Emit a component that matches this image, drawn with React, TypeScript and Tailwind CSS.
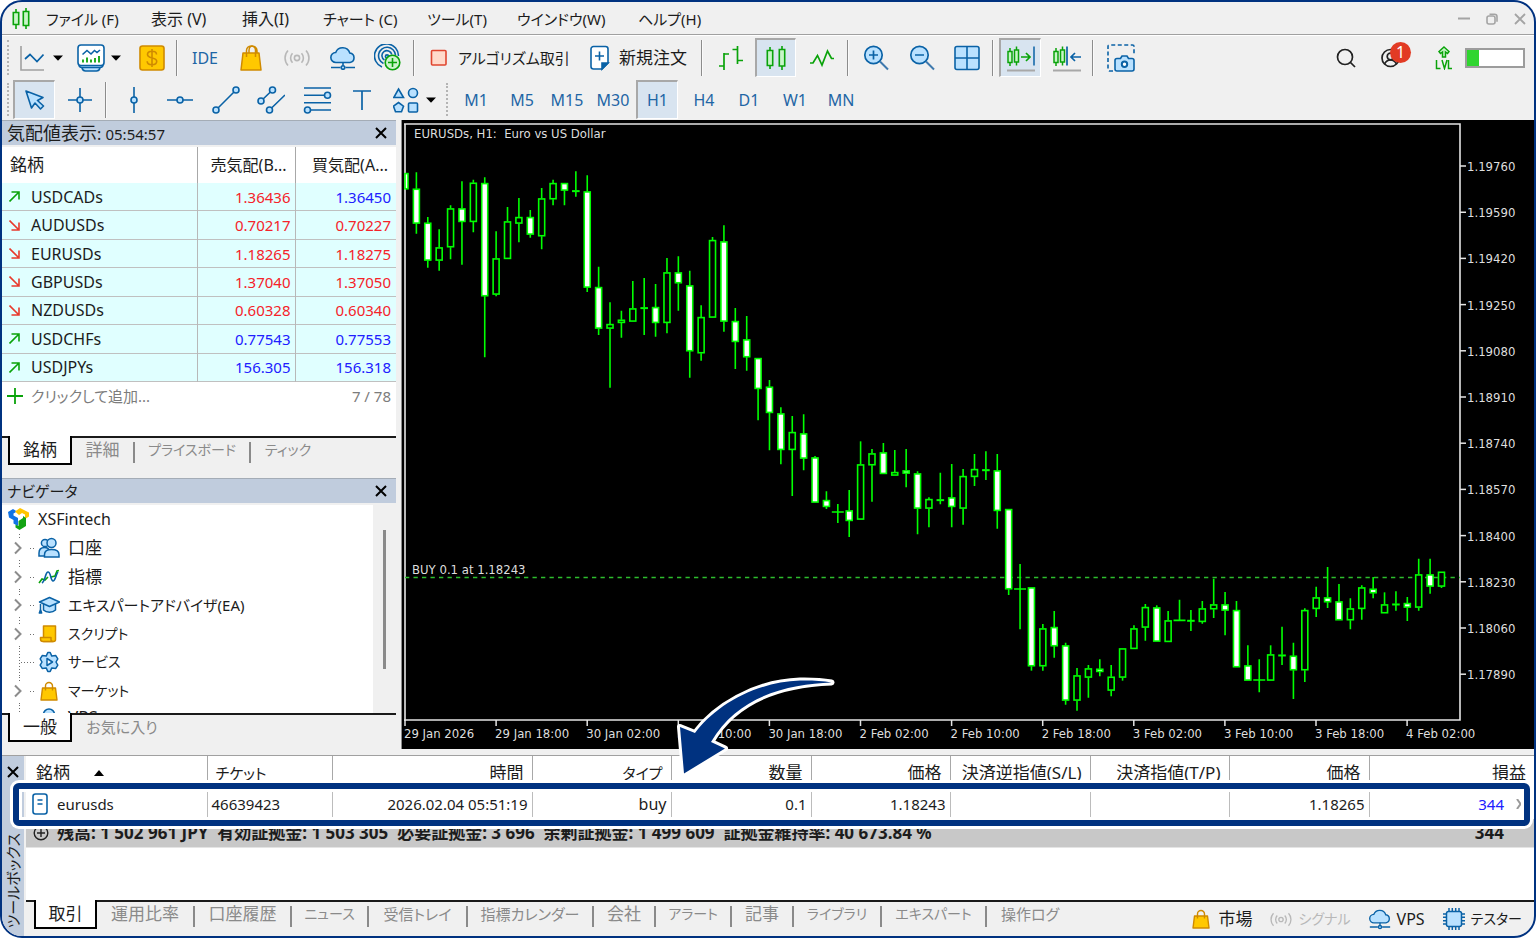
import React from "react";

/* ---------- shared pieces ---------- */

const BLUE = "#0a62a6";
const SKY = "#b9e1ff";
const GREEN = "#0aa30a";
const GOLD = "#cf8a00";
const YELLOW = "#ffc800";

type IconProps = { className?: string };

/* Kana-only labels are set smaller than kanji, mixed ones in between. */
function labelSize(label: string) {
  if (/^[ァ-ー]+$/.test(label)) return "text-sm";
  if (/[ぁ-ー]/.test(label)) return "text-[15px]";
  return "text-[17px]";
}

function Grip() {
  return (
    <div className="flex h-full w-[11px] shrink-0 justify-center py-1" aria-hidden="true">
      <div className="h-full w-0 border-l-2 border-dotted border-[#b4b4b4]" />
    </div>
  );
}

function Separator({ className = "" }: IconProps) {
  return <div className={`h-9 w-[2px] shrink-0 border-r border-[#fafafa] border-l border-l-[#8c8c8c] ${className}`} />;
}

function Caret() {
  return (
    <svg className="h-[6px] w-[10px] shrink-0" viewBox="0 0 10 6">
      <path d="M0 .5h10L5 5.8z" fill="#000" />
    </svg>
  );
}

type ToolProps = { label: string; className: string; active?: boolean; children: React.ReactNode };

function Tool({ label, className, active, children }: ToolProps) {
  const look = active
    ? "bg-[#d8e4f0] border-t-2 border-l-2 border-t-[#a8a8a8] border-l-[#a8a8a8] border-r border-b border-r-white border-b-white"
    : "";
  return (
    <button type="button" aria-label={label} aria-pressed={active} className={`flex h-[39px] shrink-0 items-center ${look} ${className}`}>
      {children}
    </button>
  );
}

function CloseX() {
  return (
    <svg className="size-3" viewBox="0 0 12 12">
      <path d="M1 1l10 10M11 1L1 11" stroke="#000" strokeWidth="2" fill="none" />
    </svg>
  );
}

/* ---------- icons ---------- */

function LogoCandles() {
  return (
    <svg className="h-[22px] w-[18px]" viewBox="0 0 18 22" stroke={GREEN} strokeWidth="1.6" fill="#c8f5c8">
      <path d="M4 1v20M14 0v21" />
      <path d="M1.300 4.500h5.400v12h-5.400zM11.300 3.500h5.400v14h-5.400z" />
    </svg>
  );
}

function Bag({ className = "" }: IconProps) {
  return (
    <svg className={className} viewBox="0 0 22 26" strokeLinejoin="round">
      <path d="M3 8h16l2 17H1z" fill={YELLOW} stroke={GOLD} strokeWidth="1.500" />
      <path d="M6.500 12V5.500a4.500 4.500 0 0 1 9 0V12M9 8V5.500C9 3 10.500 1 12.500 1S17 3 17 5.500V8" fill="none" stroke={GOLD} strokeWidth="1.500" />
    </svg>
  );
}

function SmallBag({ className = "" }: IconProps) {
  return (
    <svg className={className} viewBox="0 0 18 20" strokeLinejoin="round">
      <path d="M2.500 7h13l1.500 12H1z" fill={YELLOW} stroke={GOLD} strokeWidth="1.400" />
      <path d="M5.500 9.500V5a3.500 3.500 0 0 1 7 0v4.500" fill="none" stroke={GOLD} strokeWidth="1.400" />
    </svg>
  );
}

function Signal({ className = "" }: IconProps) {
  return (
    <svg className={className} viewBox="0 0 26 18" fill="none" stroke="#b8b8b8" strokeWidth="1.600">
      <circle cx="13" cy="9" r="2.600" />
      <path d="M8.500 4.200a7 7 0 0 0 0 9.600M17.500 4.200a7 7 0 0 1 0 9.600M4 1.500a11 11 0 0 0 0 15M22 1.500a11 11 0 0 1 0 15" />
    </svg>
  );
}

function Cloud({ className = "" }: IconProps) {
  return (
    <svg className={className} viewBox="0 0 26 24" stroke={BLUE} strokeWidth="1.600">
      <path d="M6 16.500a5 5 0 0 1-.3-10A7.500 7.500 0 0 1 19.800 7 4.800 4.800 0 0 1 20 16.500z" fill={SKY} />
      <path d="M13 16.500v3M1 21.500h9.500M15.500 21.500H25" fill="none" />
      <circle cx="13" cy="21.500" r="1.800" fill={SKY} />
    </svg>
  );
}

function Radar() {
  return (
    <svg className="h-[27px] w-[27px]" viewBox="0 0 27 27" fill="none" stroke={BLUE} strokeWidth="1.600">
      <path d="M8 23A12 12 0 1 1 24.500 12M9.500 19.500a8.500 8.500 0 1 1 12-8.500M10.500 16a5 5 0 1 1 7.300-5.500" />
      <circle cx="13" cy="12.500" r="1.600" fill={SKY} />
      <circle cx="18.500" cy="18.500" r="7.300" fill="#cdf3cd" stroke={GREEN} />
      <path d="M18.500 14v9M14 18.500h9" stroke={GREEN} />
    </svg>
  );
}

function Chip() {
  return (
    <svg className="size-[22px]" viewBox="0 0 22 22" stroke={BLUE} strokeWidth="1.500">
      <path d="M6 0v22M9.300 0v22M12.700 0v22M16 0v22M0 6h22M0 9.300h22M0 12.700h22M0 16h22" />
      <rect x="3.500" y="3.500" width="15" height="15" rx="2" fill={SKY} />
    </svg>
  );
}

/* ---------- menu bar ---------- */

const MENUS = [
  ["ファイル (F)", "w-[105px] text-[15px]"],
  ["表示 (V)", "w-[91px]"],
  ["挿入(I)", "w-[81px]"],
  ["チャート (C)", "w-[104px] text-[15px]"],
  ["ツール(T)", "w-[90px] text-[15px]"],
  ["ウインドウ(W)", "w-[121px] text-[15px]"],
  ["ヘルプ(H)", "w-[80px] text-[15px]"],
];

function MenuBar() {
  return (
    <header className="flex h-[34px] shrink-0 items-center border-b border-white pl-[10px] shadow-[inset_0_-1px_0_#a0a0a0]">
      <div className="w-[34px]"><LogoCandles /></div>
      <nav className="flex pt-px">
        {MENUS.map(([label, look]) => (
          <button key={label} type="button" className={`shrink-0 text-left leading-6 whitespace-nowrap ${look}`}>{label}</button>
        ))}
      </nav>
      <div className="ml-auto flex items-center gap-4 pr-2">
        <button type="button" aria-label="minimize">
          <svg className="size-3" viewBox="0 0 12 12"><path d="M0 5.500h12" stroke="#a4a4a4" strokeWidth="2" /></svg>
        </button>
        <button type="button" aria-label="restore">
          <svg className="size-3" viewBox="0 0 12 12" fill="none" stroke="#a4a4a4" strokeWidth="1.600">
            <rect x="1" y="3" width="8" height="8" rx="2" />
            <path d="M3.500 1.200h5a2.500 2.500 0 0 1 2.500 2.500v5" />
          </svg>
        </button>
        <button type="button" aria-label="close">
          <svg className="size-3" viewBox="0 0 12 12"><path d="M1 1l10 10M11 1L1 11" stroke="#a4a4a4" strokeWidth="1.800" /></svg>
        </button>
      </div>
    </header>
  );
}

/* ---------- toolbars ---------- */

function MainToolbar() {
  return (
    <div className="flex h-[43px] shrink-0 items-center">
      <Grip />
      <Tool label="chart" className="w-[59px] gap-[9px] pl-[7px]">
        <svg className="h-[26px] w-6 shrink-0" viewBox="0 0 24 26" fill="none">
          <path d="M1 1v24h23" stroke="#a0a0a0" strokeWidth="1.600" />
          <path d="M5 14l5-4.500 7 7 6.500-7" stroke={BLUE} strokeWidth="1.700" />
        </svg>
        <Caret />
      </Tool>
      <Tool label="profiles" className="w-[60px] gap-[6px] pl-[5px]">
        <svg className="h-[28px] w-[28px] shrink-0" viewBox="0 0 28 28" fill="none" stroke={BLUE} strokeWidth="1.600">
          <path d="M2 20.500c0 2 1 3 3 3h18c2 0 3-1 3-3M5 24c.5 1.800 1.500 3 3.500 3h11c2 0 3-1.200 3.500-3" fill={SKY} />
          <rect x="1" y="1" width="26" height="20.500" rx="3" fill="#fff" />
          <path d="M5.500 10.500l4.500-4 4 3.500 3.500-3.500 2.500 2 3-2.500" />
          <path d="M6 18.500v-3M10 18.500v-5M14 18.500v-3M18 18.500v-4.500M22 18.500v-6.500" stroke={GREEN} strokeWidth="1.800" />
        </svg>
        <Caret />
      </Tool>
      <Tool label="trade" className="w-10 justify-center">
        <svg className="size-[26px]" viewBox="0 0 26 26" fill="none" stroke={GOLD} strokeWidth="1.600">
          <rect x="1" y="1" width="24" height="24" rx="2.500" fill={YELLOW} />
          <path d="M17.500 9.500c0-2-1.800-3.200-4.500-3.200s-4.500 1.200-4.500 3.300c0 4.800 9.200 2 9.200 6.700 0 2.200-2 3.400-4.700 3.400s-4.800-1.300-4.800-3.400M13 4v18" />
        </svg>
      </Tool>
      <Separator className="mx-1" />
      <button type="button" className="w-[46px] shrink-0 leading-6 text-[#1f66a5]">IDE</button>
      <Tool label="market" className="w-[46px] justify-center"><Bag className="h-[26px] w-[22px]" /></Tool>
      <Tool label="signals" className="w-[46px] justify-center"><Signal className="h-[18px] w-[26px]" /></Tool>
      <Tool label="vps" className="w-[46px] justify-center"><Cloud className="h-6 w-[26px]" /></Tool>
      <Tool label="network" className="w-[43px] justify-center"><Radar /></Tool>
      <Separator className="mx-1" />
      <button type="button" className="flex w-[162px] shrink-0 items-center gap-[10px] pl-[11px] text-[15px] whitespace-nowrap">
        <svg className="size-[18px] shrink-0" viewBox="0 0 18 18"><rect x="1.500" y="1.500" width="14.500" height="14.500" rx="1" fill="#ffdacb" stroke="#e0452f" strokeWidth="1.600" /></svg>
        アルゴリズム取引
      </button>
      <button type="button" className="flex w-[116px] shrink-0 items-center gap-[9px] pl-[9px] text-[17px] whitespace-nowrap">
        <svg className="h-[26px] w-5 shrink-0" viewBox="0 0 20 26" stroke={BLUE} strokeWidth="1.600">
          <path d="M3.500 1.500h12a2.500 2.500 0 0 1 2.500 2.500v14l-6 6H3.500A2.500 2.500 0 0 1 1 21.500V4a2.500 2.500 0 0 1 2.500-2.500z" fill="#fff" />
          <path d="M12 24v-6h6z" fill={BLUE} />
          <path d="M9.500 6.500v9M5 11h9" fill="none" />
        </svg>
        新規注文
      </button>
      <Separator className="mx-1" />
      <Tool label="bars" className="w-12 justify-center">
        <svg className="h-[26px] w-6" viewBox="0 0 24 26" fill="none" stroke={GREEN} strokeWidth="1.700">
          <path d="M5 8v17M5 9h5M0 21h5M18.500 1v18M13.500 4.500h5M18.500 15.500H24" />
        </svg>
      </Tool>
      <Tool label="candles" active className="w-[41px] justify-center">
        <svg className="h-6 w-5" viewBox="0 0 20 24" fill="#c8f5c8" stroke={GREEN} strokeWidth="1.600">
          <path d="M4 1v22M16 0v24" />
          <path d="M1.300 4.500h5.400v15H1.300zM13.300 3.500h5.400v16.500h-5.400z" />
        </svg>
      </Tool>
      <Tool label="line" className="w-[51px] justify-center">
        <svg className="h-5 w-[26px]" viewBox="0 0 26 20" fill="none" stroke={GREEN} strokeWidth="1.700">
          <path d="M1 15h3l4.500-7.500L13 17l5.500-14 4 7.500H25" />
        </svg>
      </Tool>
      <Separator />
      <Tool label="zoom in" className="w-[54px] justify-center">
        <svg className="size-[26px]" viewBox="0 0 26 26" stroke={BLUE} strokeWidth="1.700">
          <circle cx="10.500" cy="10" r="8.700" fill={SKY} />
          <path d="M6 10h9M10.500 5.500v9" />
          <path d="M17 16.500l8 8" stroke="#3f79ad" strokeWidth="2" />
        </svg>
      </Tool>
      <Tool label="zoom out" className="w-[38px] justify-center">
        <svg className="size-[26px]" viewBox="0 0 26 26" stroke={BLUE} strokeWidth="1.700">
          <circle cx="10.500" cy="10" r="8.700" fill={SKY} />
          <path d="M6 10h9" />
          <path d="M17 16.500l8 8" stroke="#3f79ad" strokeWidth="2" />
        </svg>
      </Tool>
      <Tool label="tile" className="w-[51px] justify-center">
        <svg className="size-[26px]" viewBox="0 0 26 26" stroke={BLUE} strokeWidth="1.600">
          <rect x="1" y="1.500" width="24" height="23" rx="2" fill={SKY} />
          <path d="M13 1.500v23M1 13h24" />
        </svg>
      </Tool>
      <Separator />
      <Tool label="autoscroll" active className="ml-[5px] w-[42px] justify-center">
        <svg className="h-7 w-[28px]" viewBox="0 0 28 28" fill="#c8f5c8" stroke={GREEN} strokeWidth="1.500">
          <path d="M3 4v18M9.500 2.500v19" />
          <path d="M1 7.500h4v11H1zM7.500 6h4v12h-4z" />
          <path d="M14 13h9M19 9l4 4-4 4" fill="none" strokeWidth="1.700" />
          <path d="M27 2.500v19" stroke={BLUE} />
          <path d="M0 26.500h28" stroke="#a8a8a8" strokeWidth="2" />
        </svg>
      </Tool>
      <Tool label="shift" className="w-[51px] justify-center">
        <svg className="h-7 w-[28px]" viewBox="0 0 28 28" fill="#c8f5c8" stroke={GREEN} strokeWidth="1.500">
          <path d="M3 4v18M9.500 2.500v19" />
          <path d="M1 7.500h4v11H1zM7.500 6h4v12h-4z" />
          <path d="M14 2.500v19M18 13h10M22 9l-4 4 4 4" stroke={BLUE} fill="none" strokeWidth="1.700" />
          <path d="M0 26.500h28" stroke="#a8a8a8" strokeWidth="2" />
        </svg>
      </Tool>
      <Separator />
      <Tool label="screenshot" className="w-[54px] justify-center">
        <svg className="size-7" viewBox="0 0 28 28" stroke={BLUE} strokeWidth="1.600" fill="none">
          <path d="M6 27H2.500C1.500 27 1 26.500 1 25.500V2.500C1 1.500 1.500 1 2.500 1h23c1 0 1.500.5 1.500 1.500V10" strokeDasharray="4 2.500" />
          <path d="M10 14.500h3.500l1.500-2.500h5l1.500 2.500H25a2 2 0 0 1 2 2V25a2 2 0 0 1-2 2H10a2 2 0 0 1-2-2v-8.500a2 2 0 0 1 2-2z" fill={SKY} />
          <circle cx="17.500" cy="20.200" r="2.700" fill="#fff" strokeWidth="2" />
        </svg>
      </Tool>
      <div className="ml-auto flex items-center pr-[9px]">
        <button type="button" aria-label="search" className="mr-[25px]">
          <svg className="size-5" viewBox="0 0 20 20" fill="none" stroke="#222" strokeWidth="1.700"><circle cx="9" cy="9" r="7.500" /><path d="M14.500 14.500L19 19" /></svg>
        </button>
        <button type="button" aria-label="account" className="relative mr-6 h-5 w-[30px]">
          <svg className="size-5" viewBox="0 0 20 20" fill="none" stroke="#222" strokeWidth="1.700">
            <circle cx="9.500" cy="10" r="8.500" /><circle cx="9.500" cy="8.500" r="3.300" /><path d="M3.500 16c1.500-3 3.500-4 6-4s4.500 1 6 4" />
          </svg>
          <span className="absolute -top-[6px] left-[9px] flex size-[21px] items-center justify-center rounded-full bg-[#e23b24] text-base leading-5 text-white">1</span>
        </button>
        <svg className="mr-3 h-[24px] w-[18px]" viewBox="0 0 18 24" fill="#c8f5c8" stroke={GREEN} strokeWidth="1.500" aria-label="LVL" role="img">
          <path d="M9 1l5 4.500-1.500 2L10.500 6v5h-3V6l-2 1.500L4 5.500z" />
          <path d="M1.500 14v8.500h4M7 14l2.500 8.500L12 14M13.500 14v8.500H17" fill="none" />
        </svg>
        <div className="flex h-5 w-[60px] border-2 border-[#9c9c9c] bg-white"><div className="w-3 bg-[#2fd52f]" /></div>
      </div>
    </div>
  );
}

const FRAMES = [
  ["M1", "w-12"],
  ["M5", "w-11"],
  ["M15", "w-[46px]"],
  ["M30", "w-[46px]"],
  ["H1", "w-[42px]"],
  ["H4", "w-[52px]"],
  ["D1", "w-[38px]"],
  ["W1", "w-[54px]"],
  ["MN", "w-[38px]"],
];

function DrawToolbar() {
  const line = { fill: SKY, stroke: BLUE, strokeWidth: 1.6 };
  return (
    <div className="flex h-[41px] shrink-0 items-center">
      <Grip />
      <Tool label="cursor" active className="w-[42px] justify-center">
        <svg className="size-5" viewBox="0 0 20 20" {...line} strokeLinejoin="round">
          <path d="M1 1l17 6.500-5.500 3 6 5.500-3 3-5.500-6-3.500 5z" />
        </svg>
      </Tool>
      <Tool label="crosshair" className="w-[50px] justify-center">
        <svg className="size-6" viewBox="0 0 24 24" {...line}><path d="M12 0v24M0 12h24" /><circle cx="12" cy="12" r="3" /></svg>
      </Tool>
      <Separator />
      <Tool label="vertical line" className="w-[54px] justify-center">
        <svg className="size-[26px]" viewBox="0 0 26 26" {...line}><path d="M13 0v26" /><circle cx="13" cy="13" r="3" /></svg>
      </Tool>
      <Tool label="horizontal line" className="w-[38px] justify-center">
        <svg className="size-[26px]" viewBox="0 0 26 26" {...line}><path d="M0 13h26" /><circle cx="13" cy="13" r="3" /></svg>
      </Tool>
      <Tool label="trend line" className="w-[54px] justify-center">
        <svg className="size-7" viewBox="0 0 28 28" {...line}><path d="M4 24L24 4" /><circle cx="4" cy="24" r="3" /><circle cx="24" cy="4" r="3" /></svg>
      </Tool>
      <Tool label="channel" className="w-9 justify-center">
        <svg className="size-7" viewBox="0 0 28 28" {...line}>
          <path d="M4 15L15.500 4M12.500 24L28 9" /><circle cx="4" cy="15" r="3" /><circle cx="15.500" cy="4" r="3" /><circle cx="12.500" cy="24" r="3" />
        </svg>
      </Tool>
      <Tool label="fibonacci" className="w-14 justify-center">
        <svg className="size-[26px] overflow-visible" viewBox="0 0 26 26" {...line}>
          <path d="M0 1h27M0 8.300h27M0 15.700h27M0 23h27" /><circle cx="23.500" cy="8.300" r="3" /><circle cx="3.500" cy="23" r="3" />
        </svg>
      </Tool>
      <Tool label="text" className="w-[34px] justify-center">
        <svg className="size-5" viewBox="0 0 20 20" stroke={BLUE} strokeWidth="1.700"><path d="M1 1h18M10 1v19" /></svg>
      </Tool>
      <Tool label="shapes" className="w-[62px] gap-[7px] pl-[14px]">
        <svg className="size-[26px] shrink-0" viewBox="0 0 26 26" {...line}>
          <path d="M5.500 2l5 8.500H.8zM5.500 15.500l5 3.700-2 5.500h-6l-2-5.500z" /><circle cx="20" cy="6" r="4.500" /><rect x="15.500" y="16" width="9" height="9" rx="1" />
        </svg>
        <Caret />
      </Tool>
      <Grip />
      {FRAMES.map(([label, width]) => (
        <Tool key={label} label={label} active={label === "H1"} className={`justify-center text-[#1f66a5] ${width}`}>{label}</Tool>
      ))}
    </div>
  );
}

/* ---------- left panels ---------- */

function PanelTitle({ children }: { children: React.ReactNode }) {
  return (
    <div className="flex h-[25px] shrink-0 items-center justify-between border-t border-[#a4acb6] bg-[#c0ccdd] pr-[9px] pl-[5px]">
      <h2>{children}</h2>
      <button type="button" aria-label="close panel"><CloseX /></button>
    </div>
  );
}

type TabDef = { label: string; width: string };

function Tabs({ tabs, pad, activeWidth }: { tabs: TabDef[]; pad: string; activeWidth: string }) {
  return (
    <div className={`flex border-t-2 border-[#1a1a1a] ${pad}`}>
      {tabs.map((tab, i) =>
        i === 0 ? (
          <button key={tab.label} type="button" className={`-mt-[2px] h-[29px] shrink-0 border-x-2 border-b-2 border-black bg-white text-[17px] leading-6 ${activeWidth}`}>{tab.label}</button>
        ) : (
          <button key={tab.label} type="button" className={`my-1 flex h-[21px] shrink-0 items-start justify-center whitespace-nowrap text-[#8a8a8a] ${i < tabs.length - 1 ? "border-r-2 border-[#8a8a8a]" : ""} ${tab.width}`}>
            <span className={labelSize(tab.label)}><span className="block leading-4">{tab.label}</span></span>
          </button>
        ),
      )}
    </div>
  );
}

type Quote = [string, boolean, string, string, string, string];
const RED = "text-[#f5232a]";
const INK = "text-[#2020ff]";
const QUOTES: Quote[] = [
  ["USDCADs", true, "1.36436", "1.36450", RED, INK],
  ["AUDUSDs", false, "0.70217", "0.70227", RED, RED],
  ["EURUSDs", false, "1.18265", "1.18275", RED, RED],
  ["GBPUSDs", false, "1.37040", "1.37050", RED, RED],
  ["NZDUSDs", false, "0.60328", "0.60340", RED, RED],
  ["USDCHFs", true, "0.77543", "0.77553", INK, INK],
  ["USDJPYs", true, "156.305", "156.318", INK, INK],
];

function MarketWatch() {
  return (
    <section className="shrink-0">
      <PanelTitle><span className="text-lg leading-6">気配値表示</span>: <span className="text-[15px]">05:54:57</span></PanelTitle>
      <div className="mt-[2px] h-[289px] bg-white">
        <table className="h-[235px] w-full table-fixed border-collapse">
          <colgroup><col /><col className="w-[98px]" /><col className="w-[101px]" /></colgroup>
          <thead>
            <tr className="h-[36px] whitespace-nowrap">
              <th className="border-r border-[#a8a8a8] pl-2 text-left text-[17px] font-normal">銘柄</th>
              <th className="border-r border-[#a8a8a8] p-0 pr-2 text-right font-normal">売気配(B...</th>
              <th className="p-0 pr-2 text-right font-normal">買気配(A...</th>
            </tr>
          </thead>
          <tbody className="bg-[#e0ffff]">
            {QUOTES.map(([name, up, bid, ask, bidTone, askTone]) => (
              <tr key={name} className="border-b border-[#c0c0c0]">
                <td className="border-r border-[#b8b8b8] p-0 pl-[7px]">
                  <div className="flex items-center gap-[11px]">
                    <svg className="size-[11px]" viewBox="0 0 11 11" fill="none" stroke={up ? GREEN : "#e83a2c"} strokeWidth="1.600">
                      {up ? <path d="M.5 10.500L10 1M2.500 1H10v7.500" /> : <path d="M.5.5L10 10M2.500 10H10V2.500" />}
                    </svg>
                    <span className="leading-6">{name}</span>
                  </div>
                </td>
                <td className={`border-r border-[#b8b8b8] p-0 pr-1 text-right text-[15px] ${bidTone}`}>{bid}</td>
                <td className={`p-0 pr-[5px] text-right text-[15px] ${askTone}`}>{ask}</td>
              </tr>
            ))}
          </tbody>
        </table>
        <div className="flex h-7 items-center px-[5px] text-[15px] text-[#7c7c7c]">
          <svg className="mr-2 size-4" viewBox="0 0 16 16"><path d="M8 0v16M0 8h16" stroke={GREEN} strokeWidth="1.800" /></svg>
          <button type="button">クリックして追加...</button>
          <span className="ml-auto">7 / 78</span>
        </div>
      </div>
      <div className="h-[42px]">
        <Tabs
          pad="pl-[6px]"
          activeWidth="w-[64px]"
          tabs={[
            { label: "銘柄", width: "" },
            { label: "詳細", width: "w-[63px]" },
            { label: "プライスボード", width: "w-[116px]" },
            { label: "ティック", width: "w-[74px]" },
          ]}
        />
      </div>
    </section>
  );
}

const NAV_ICONS: Record<string, React.ReactNode> = {
  accounts: (
    <g fill={SKY} stroke={BLUE} strokeWidth="1.500">
      <circle cx="7" cy="6" r="3.600" /><path d="M1 19v-3c0-3.500 2-5.500 5.500-5.500S11 12 11 14v5z" />
      <circle cx="13.500" cy="6" r="4.500" /><path d="M6.500 20v-2.500c0-3 2.500-5 7-5s7.500 2 7.500 5V20z" />
    </g>
  ),
  indicators: (
    <g fill="none" strokeWidth="1.600">
      <path d="M1 17l3-4 3 1 3-3M13 11l4-1 2-5 2-.5" stroke={GREEN} />
      <path d="M4 17C8 14 7 6 10 6s2.500 9 5 9 3-7 5-9" stroke={BLUE} />
    </g>
  ),
  experts: (
    <g fill={SKY} stroke={BLUE} strokeWidth="1.500" strokeLinejoin="round">
      <path d="M5.500 9.500V16c3 3 9 3 12 0V9.500" /><path d="M11.500 3.500L21.500 8l-10 4.500L1.500 8zM2.500 8.500V18" />
      <path d="M2.500 16l-1.200 3h2.400z" fill={BLUE} />
    </g>
  ),
  scripts: (
    <g fill={YELLOW} stroke={GOLD} strokeWidth="1.500" strokeLinejoin="round">
      <path d="M5.500 3h12v13.500a2 2 0 0 1-2 2H5.500z" /><path d="M2.500 14.500h10.500v2c0 1 .8 2 2 2H5a2.500 2.500 0 0 1-2.500-2.500z" />
    </g>
  ),
  services: (
    <g fill={SKY} stroke={BLUE} strokeWidth="1.500" strokeLinejoin="round">
      <path d="M9.800 1.500h2.400l1.600 3.600 4-.5 2 3.200L18 11l1.800 3.200-2 3.200-4-.5-1.600 3.600H9.800l-1.600-3.600-4 .5-2-3.200L4 11 2.200 7.800l2-3.200 4 .5z" />
      <path d="M9 7.500v7l5.500-3.500z" fill="#fff" />
    </g>
  ),
  vps: <path d="M5.500 9.500A5.500 5.500 0 0 1 16.500 9.500" fill={SKY} stroke={BLUE} strokeWidth="1.600" />,
};

const NAV_ITEMS = [
  ["口座", "accounts", true],
  ["指標", "indicators", true],
  ["エキスパートアドバイザ(EA)", "experts", true],
  ["スクリプト", "scripts", true],
  ["サービス", "services", false],
  ["マーケット", "market", true],
  ["VPS", "vps", false],
] as const;

function Navigator() {
  return (
    <section className="flex min-h-0 flex-1 flex-col">
      <PanelTitle><span className="text-[15px]">ナビゲータ</span></PanelTitle>
      <div className="mt-[2px] flex min-h-0 flex-1 overflow-hidden">
        <ul className="flex h-[229px] flex-1 flex-col bg-white">
          <li className="flex flex-1 items-center gap-2 pl-[6px]">
            <svg className="size-[22px]" viewBox="0 0 22 22">
              <path d="M0 4l5-3 4 2.500-3.500 2v2L10 10v8L5.500 15.500V12L1 9.500z" fill="#1173e6" />
              <path d="M7 3.500L12 0l9 4.500v4L17 11V6.500l-3-1.500L11 7z" fill="#ffc400" />
              <path d="M10.500 13l4.500-3V8l3 2v8l-6.500 4-4-2.500v-3l3 1.500z" fill="#13a313" />
            </svg>
            XSFintech
          </li>
          {NAV_ITEMS.map(([label, icon, open]) => (
            <li key={label} className={`flex flex-1 ${icon === "vps" ? "items-start" : "items-center"}`}>
              <svg className="h-[28px] w-[36px] shrink-0" viewBox="0 0 36 28" fill="none">
                <path d={open ? "M17.500 0v4M17.500 26v2M28 14.500h5" : "M17.500 0v28M19 14.500h14"} stroke="#6e6e6e" strokeDasharray="1 2" />
                {open && <path d="M13 8.500l5.500 5.500-5.500 5.500" stroke="#8c8c8c" strokeWidth="2" />}
              </svg>
              {icon === "market" ? (
                <SmallBag className="mr-2 h-5 w-[22px] shrink-0" />
              ) : (
                <svg className="mr-2 size-[22px] shrink-0" viewBox="0 0 22 22">{NAV_ICONS[icon]}</svg>
              )}
              <span className={`whitespace-nowrap ${labelSize(label)}`}>{label}</span>
            </li>
          ))}
        </ul>
        <div className="w-[23px] pt-[25px] pl-[10px]"><div className="h-[139px] w-[3px] bg-[#8a8a8a]" /></div>
      </div>
      <div className="relative h-[42px] shrink-0">
        <Tabs pad="pl-[6px]" activeWidth="w-[64px]" tabs={[{ label: "一般", width: "" }, { label: "お気に入り", width: "w-[100px]" }]} />
      </div>
    </section>
  );
}

/* ---------- chart ---------- */

/* Each candle: high, body top, body bottom, low, kind (f = bearish, o = bullish, d = doji). Levels are thirds of a unit below the block's base. */
type Candle = [number, number, number, number, "f" | "o" | "d"];
const BLOCKS: { base: number; candles: Candle[] }[] = [
  {
    base: 118,
    candles: [
      [165, 165, 214, 214, "f"], [163, 212, 317, 347, "f"], [297, 314, 428, 449, "f"], [334, 388, 428, 458, "o"],
      [262, 271, 388, 424, "o"], [190, 271, 312, 440, "f"], [185, 194, 312, 343, "o"], [178, 195, 535, 718, "f"],
      [340, 421, 530, 535, "o"], [267, 310, 423, 423, "o"], [240, 297, 317, 373, "o"], [276, 297, 350, 359, "f"],
      [210, 241, 355, 394, "o"], [185, 195, 244, 262, "o"], [195, 195, 218, 262, "f"], [160, 217, 221, 236, "f"],
      [172, 220, 509, 522, "f"], [446, 507, 632, 651, "f"], [553, 618, 632, 809, "o"], [578, 605, 615, 659, "o"],
      [489, 571, 611, 611, "o"], [480, 568, 571, 651, "f"], [498, 567, 615, 656, "f"], [420, 463, 615, 646, "o"],
      [415, 463, 496, 578, "f"], [458, 502, 700, 779, "f"], [562, 597, 706, 728, "o"], [357, 366, 599, 599, "o"],
      [322, 370, 611, 641, "f"],
    ],
  },
  {
    base: 300,
    candles: [
      [24, 63, 126, 207, "f"], [48, 118, 172, 212, "f"], [174, 174, 267, 361, "f"], [240, 260, 339, 451, "f"],
      [322, 340, 450, 493, "f"], [348, 396, 450, 588, "o"], [343, 400, 476, 511, "f"], [468, 472, 608, 608, "f"],
      [574, 600, 621, 627, "f"], [612, 636, 636, 669, "d"], [570, 631, 663, 711, "f"], [424, 493, 659, 659, "o"],
      [447, 460, 496, 605, "o"], [429, 457, 522, 522, "f"], [450, 516, 527, 527, "o"], [447, 511, 521, 562, "f"],
      [514, 520, 626, 703, "f"], [592, 597, 626, 682, "o"], [518, 598, 602, 613, "f"], [492, 592, 621, 682, "f"],
      [507, 528, 626, 674, "o"], [462, 507, 531, 558, "o"], [454, 508, 513, 540, "f"], [462, 511, 633, 686, "f"],
      [627, 627, 868, 885, "f"],
    ],
  },
  {
    base: 530,
    candles: [
      [102, 177, 177, 298, "d"], [172, 172, 409, 422, "f"], [282, 295, 409, 422, "o"], [243, 291, 349, 383, "f"],
      [338, 346, 512, 524, "f"], [414, 436, 512, 542, "o"], [405, 415, 443, 503, "o"], [388, 416, 426, 439, "f"],
      [405, 440, 482, 499, "o"], [355, 355, 443, 452, "o"], [286, 295, 357, 357, "o"], [222, 231, 293, 332, "o"],
      [226, 232, 335, 335, "f"], [243, 271, 336, 336, "o"], [209, 271, 271, 271, "d"], [240, 270, 274, 303, "f"],
      [213, 235, 276, 281, "o"], [146, 223, 238, 264, "o"], [186, 223, 242, 316, "f"], [213, 240, 412, 412, "f"],
      [346, 406, 452, 452, "f"], [388, 450, 450, 487, "d"], [346, 373, 452, 452, "o"], [290, 374, 378, 405, "f"],
      [338, 377, 421, 507, "f"], [235, 240, 421, 456, "o"], [170, 202, 237, 261, "o"], [111, 202, 217, 234, "f"],
      [162, 214, 271, 271, "f"], [205, 235, 271, 298, "o"], [166, 172, 237, 269, "o"], [141, 176, 190, 205, "f"],
      [187, 223, 250, 250, "o"], [184, 221, 225, 242, "f"], [201, 219, 233, 273, "f"], [86, 133, 233, 242, "o"],
      [86, 133, 170, 191, "f"], [125, 125, 170, 174, "o"],
    ],
  },
];
const CANDLES = BLOCKS.flatMap(({ base, candles }) =>
  candles.map(([high, top, bottom, low, kind]) => ({ high: base + high / 3, top: base + top / 3, bottom: base + bottom / 3, low: base + low / 3, kind })),
);

const PRICES = ["1.19760", "1.19590", "1.19420", "1.19250", "1.19080", "1.18910", "1.18740", "1.18570", "1.18400", "1.18230", "1.18060", "1.17890"];
const TIMES = ["29 Jan 2026", "29 Jan 18:00", "30 Jan 02:00", "30 Jan 10:00", "30 Jan 18:00", "2 Feb 02:00", "2 Feb 10:00", "2 Feb 18:00", "3 Feb 02:00", "3 Feb 10:00", "3 Feb 18:00", "4 Feb 02:00"];

function Chart() {
  return (
    <div className="mb-[6px] ml-[5px] min-w-0 flex-1 bg-black">
      <svg className="size-full" viewBox="401 120 1133 629" role="img" aria-label="EURUSDs H1">
        <path d="M401.500 120v629" stroke="#8c8c8c" />
        <path d="M405 124v597" stroke="#b8b8b8" strokeWidth="2" />
        <path d="M404 124h1056V720H404" fill="none" stroke="#e4e4e4" strokeWidth="1.600" />
        <path d="M405 577.500h1055" stroke="#2dbd2d" strokeWidth="1.400" strokeDasharray="4.300 4.200" />
        <g stroke="#00ff00" strokeWidth="1.600">
          {CANDLES.map((c, i) => {
            const x = 405 + i * 11.39;
            if (c.kind === "d") {
              return <path key={i} d={`M${x} ${c.high}V${c.low}M${x - 6} ${c.top}h12`} />;
            }
            const left = i === 0 ? x : x - 3;
            const width = i === 0 ? 3 : 6;
            return (
              <g key={i}>
                <path d={`M${x} ${c.high}V${c.top}M${x} ${c.bottom}V${c.low}`} />
                <rect x={left} y={c.top + 0.6} width={width} height={Math.max(c.bottom - c.top - 1.2, 0.4)} fill={c.kind === "f" ? "#fff" : "#000"} />
              </g>
            );
          })}
        </g>
        <g fill="#dedede" className="font-['DejaVu_Sans_Condensed','DejaVu_Sans',sans-serif] text-[13px]">
          <text x="414" y="138">EURUSDs, H1:&nbsp; Euro vs US Dollar</text>
          <text x="412" y="574">BUY 0.1 at 1.18243</text>
          {PRICES.map((price, i) => {
            const y = 166 + i * 46.2;
            return (
              <g key={price}>
                <path d={`M1460 ${y}h6`} stroke="#e4e4e4" strokeWidth="1.500" />
                <text x="1467" y={y + 5}>{price}</text>
              </g>
            );
          })}
          {TIMES.map((time, i) => {
            const x = 405 + i * 91.1;
            return (
              <g key={time}>
                <path d={`M${x} 720v6`} stroke="#e4e4e4" strokeWidth="1.500" />
                <text x={x - 1} y="738">{time}</text>
              </g>
            );
          })}
        </g>
      </svg>
    </div>
  );
}

/* ---------- toolbox ---------- */

const COLUMNS = [
  ["チケット", "w-[125px]", "pl-2 text-left text-[15px]"],
  ["時間", "w-[200px]", "pr-2 text-right"],
  ["タイプ", "w-[139px]", "pr-2 text-right text-[15px]"],
  ["数量", "w-[140px]", "pr-2 text-right"],
  ["価格", "w-[139px]", "pr-2 text-right"],
  ["決済逆指値(S/L)", "w-[140px]", "pr-2 text-right"],
  ["決済指値(T/P)", "w-[139px]", "pr-2 text-right"],
  ["価格", "w-[140px]", "pr-2 text-right"],
];

const TOOLBOX_TABS: TabDef[] = [
  { label: "取引", width: "" },
  { label: "運用比率", width: "w-[98px]" },
  { label: "口座履歴", width: "w-[97px]" },
  { label: "ニュース", width: "w-[77px]" },
  { label: "受信トレイ", width: "w-[99px]" },
  { label: "指標カレンダー", width: "w-[126px]" },
  { label: "会社", width: "w-[62px]" },
  { label: "アラート", width: "w-[76px]" },
  { label: "記事", width: "w-[62px]" },
  { label: "ライブラリ", width: "w-[88px]" },
  { label: "エキスパート", width: "w-[105px]" },
  { label: "操作ログ", width: "w-[86px]" },
];

const CELL = "border-r border-[#bcbcbc] p-0 pr-1 text-right";

function Toolbox() {
  return (
    <section className="relative flex shrink-0 border-t border-[#a0a0a0]">
      <aside className="mr-[2px] flex w-[22px] shrink-0 flex-col items-center justify-between bg-[#c0ccdd] pt-[10px] pb-2">
        <button type="button" aria-label="close toolbox"><CloseX /></button>
        <h2 className="rotate-180 text-[15px] leading-5 whitespace-nowrap [text-orientation:sideways] [writing-mode:vertical-rl]">ツールボックス</h2>
      </aside>
      <div className="min-w-0 flex-1">
        <div className="h-[144px] bg-white">
          <table className="w-full table-fixed border-collapse whitespace-nowrap">
            <colgroup>
              <col className="w-[181px]" />
              {COLUMNS.map(([, width], i) => <col key={i} className={width} />)}
              <col />
            </colgroup>
            <thead>
              <tr className="h-[33px] text-[17px]">
                <th className="border-r border-[#a8a8a8] p-0 pl-[10px] font-normal">
                  <div className="flex items-center gap-6">
                    銘柄
                    <svg className="h-[6px] w-[10px]" viewBox="0 0 10 6"><path d="M0 6h10L5 0z" fill="#000" /></svg>
                  </div>
                </th>
                {COLUMNS.map(([label, , look], i) => (
                  <th key={i} className={`border-r border-[#a8a8a8] p-0 font-normal ${look}`}>{label}</th>
                ))}
                <th className="p-0 pr-2 text-right font-normal">損益</th>
              </tr>
            </thead>
            <tbody className="text-[15px]">
              <tr className="h-[30px]">
                <td className="border-r border-[#bcbcbc] p-0 pl-[6px]">
                  <div className="flex items-center gap-[9px]">
                    <svg className="h-[22px] w-4" viewBox="0 0 16 22" stroke={BLUE} strokeWidth="1.600" fill="#fff">
                      <rect x="1" y="1" width="14" height="20" rx="2.500" /><path d="M5.500 7h5M5.500 11h5" />
                    </svg>
                    <span className="leading-6">eurusds</span>
                  </div>
                </td>
                <td className="border-r border-[#bcbcbc] p-0 pl-1">46639423</td>
                <td className={CELL}>2026.02.04 05:51:19</td>
                <td className={`${CELL} text-base`}>buy</td>
                <td className={CELL}>0.1</td>
                <td className={CELL}>1.18243</td>
                <td className={CELL} />
                <td className={CELL} />
                <td className={CELL}>1.18265</td>
                <td className="p-0">
                  <div className="flex items-center justify-end gap-3 pr-3 text-[#2020ff]">
                    344
                    <svg className="h-[10px] w-[6px]" viewBox="0 0 6 10"><path d="M1 0l3.500 5L1 10" fill="none" stroke="#9a9a9a" strokeWidth="2" /></svg>
                  </div>
                </td>
              </tr>
              <tr className="h-7 border-b border-[#e4e4e4] bg-[#c8c8c8] text-[17px] font-bold">
                <td colSpan={9} className="p-0 pl-[7px]">
                  <div className="flex items-center gap-2">
                    <svg className="size-4 shrink-0" viewBox="0 0 16 16" fill="none" stroke="#222" strokeWidth="1.400"><circle cx="8" cy="8" r="6.800" /><path d="M8 4v8M4 8h8" /></svg>
                    <span className="leading-5 whitespace-pre">残高: 1 502 961 JPY  有効証拠金: 1 503 305  必要証拠金: 3 696  余剰証拠金: 1 499 609  証拠金維持率: 40 673.84 %</span>
                  </div>
                </td>
                <td className="p-0 pr-[30px] text-right leading-5">344</td>
              </tr>
            </tbody>
          </table>
        </div>
        <div className="flex h-9 justify-between">
          <div className="min-w-0 flex-1"><Tabs pad="pl-2" activeWidth="w-[63px]" tabs={TOOLBOX_TABS} /></div>
          <div className="flex shrink-0 items-center gap-[18px] border-t-2 border-[#1a1a1a] pr-3 whitespace-nowrap">
            <button type="button" className="flex items-center gap-2 text-[17px] leading-6"><SmallBag className="h-5 w-[18px]" />市場</button>
            <button type="button" className="flex items-center gap-[6px] text-sm leading-6 text-[#b8b8b8]"><Signal className="h-[15px] w-[22px]" />シグナル</button>
            <button type="button" className="flex items-center gap-[6px] leading-6"><Cloud className="h-[22px] w-[22px]" />VPS</button>
            <button type="button" className="flex items-center gap-[6px] text-sm leading-6"><Chip />テスター</button>
          </div>
        </div>
      </div>
      <div className="pointer-events-none absolute top-[27px] right-[4px] left-[11px] h-[43px] rounded-[6px] border-[6px] border-[#003280] shadow-[0_0_0_3px_#fff,inset_0_0_0_3px_#fff]" />
      <svg className="pointer-events-none absolute -top-[85px] left-[668px] h-[110px] w-[170px]" viewBox="670 670 170 110">
        <path
          d="M684 772.500L680 726l15 6C714 706 754 681 800 679.500c12-.2 22 .3 31.500 2C790 683 738 694 711 741l14 6.500z"
          fill="#003280" stroke="#fff" strokeWidth="6" strokeLinejoin="round" paintOrder="stroke"
        />
      </svg>
    </section>
  );
}

export default function App() {
  return (
    <div className="h-screen min-h-[760px] bg-white">
      <div className="flex h-full flex-col overflow-hidden rounded-[22px] border-2 border-[#003280] bg-[#f0f0f0] font-['Noto_Sans','Noto_Sans_CJK_JP',sans-serif] text-base leading-6 text-[#1c1c1c] [font-feature-settings:'palt']">
        <MenuBar />
        <MainToolbar />
        <DrawToolbar />
        <main className="flex min-h-0 flex-1">
          <div className="flex w-[394px] shrink-0 flex-col">
            <MarketWatch />
            <Navigator />
          </div>
          <Chart />
        </main>
        <Toolbox />
      </div>
    </div>
  );
}
